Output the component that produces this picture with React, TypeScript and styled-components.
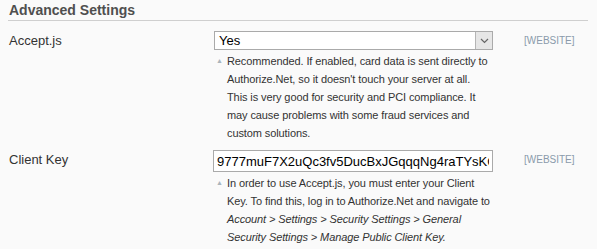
import React from 'react';
import styled, { createGlobalStyle } from 'styled-components';

const GlobalStyle = createGlobalStyle`
  html, body {
    margin: 0;
    padding: 0;
    background: #fafafa;
  }
  body {
    font-family: 'Liberation Sans', Arial, sans-serif;
    color: #333;
  }
`;

type RowProps = {
  label: string;
  control: React.ReactNode;
  children: React.ReactNode;
};

const SettingRow: React.FC<RowProps> = ({ label, control, children }) => (
  <Row>
    <Label>{label}</Label>
    <Value>
      {control}
      <Note>
        <Arrow>▲</Arrow>
        <NoteText>{children}</NoteText>
      </Note>
    </Value>
    <Scope>[WEBSITE]</Scope>
  </Row>
);

export default function App() {
  return (
    <>
      <GlobalStyle />
      <Section>
        <Heading>Advanced Settings</Heading>
        <SettingRow
          label="Accept.js"
          control={
            <SelectBox>
              <SelectText>Yes</SelectText>
              <SelectButton>
                <svg width="9" height="6" viewBox="0 0 9 6">
                  <path d="M1 1 L4.5 4.5 L8 1" fill="none" stroke="#666" strokeWidth="1.2" />
                </svg>
              </SelectButton>
            </SelectBox>
          }
        >
          Recommended. If enabled, card data is sent directly to Authorize.Net, so it
          doesn't touch your server at all. This is very good for security and PCI
          compliance. It may cause problems with some fraud services and custom
          solutions.
        </SettingRow>
        <SettingRow
          label="Client Key"
          control={<TextInput readOnly value="9777muF7X2uQc3fv5DucBxJGqqqNg4raTYsKC8UhH3Z" />}
        >
          In order to use Accept.js, you must enter your Client Key. To find this, log in
          to Authorize.Net and navigate to{' '}
          <em>
            Account &gt; Settings &gt; Security Settings &gt; General Security Settings
            &gt; Manage Public Client Key.
          </em>
        </SettingRow>
      </Section>
    </>
  );
}

const Section = styled.div`
  padding: 0 9px 0 8px;
`;

const Heading = styled.h3`
  margin: 0;
  padding: 3px 0 2px 1px;
  font-size: 14px;
  line-height: 15px;
  font-weight: bold;
  color: #4f4f4f;
  border-bottom: 1px solid #cfcfcf;
`;

const Row = styled.div`
  display: grid;
  grid-template-columns: 205px 280px 31px 1fr;
  padding-top: 10px;

  & + & {
    padding-top: 8px;
  }
`;

const Label = styled.div`
  grid-column: 1;
  padding: 2px 0 0 1px;
  font-size: 13px;
  line-height: 16px;
  color: #333;
`;

const Value = styled.div`
  grid-column: 2;
`;

const Scope = styled.div`
  grid-column: 4;
  padding-top: 3px;
  font-size: 10px;
  line-height: 14px;
  color: #8a9aab;
`;

const SelectBox = styled.div`
  display: flex;
  height: 19px;
  box-sizing: border-box;
  border: 1px solid #aaa;
  background: #fff;
  margin-left: 1px;
`;

const SelectText = styled.span`
  flex: 1;
  padding-left: 4px;
  font-size: 13px;
  line-height: 17px;
  color: #000;
`;

const SelectButton = styled.span`
  width: 16px;
  display: flex;
  align-items: center;
  justify-content: center;
  background: #e6e6e6;
  border-left: 1px solid #b5b5b5;
`;

const TextInput = styled.input`
  display: block;
  width: 100%;
  height: 22px;
  box-sizing: border-box;
  margin: 0;
  padding: 0 3px;
  border: 1px solid #aaa;
  background: #fff;
  font-family: 'Liberation Sans', Arial, sans-serif;
  font-size: 13px;
  color: #000;
  outline: none;
`;

const Note = styled.div`
  display: flex;
  padding: 2px 0 0 3px;
`;

const Arrow = styled.span`
  flex: none;
  width: 11px;
  font-size: 7px;
  line-height: 18px;
  color: #aab4bc;
`;

const NoteText = styled.div`
  font-size: 11px;
  line-height: 18px;
  letter-spacing: -0.1px;
  color: #333;

  em {
    font-style: italic;
  }
`;
